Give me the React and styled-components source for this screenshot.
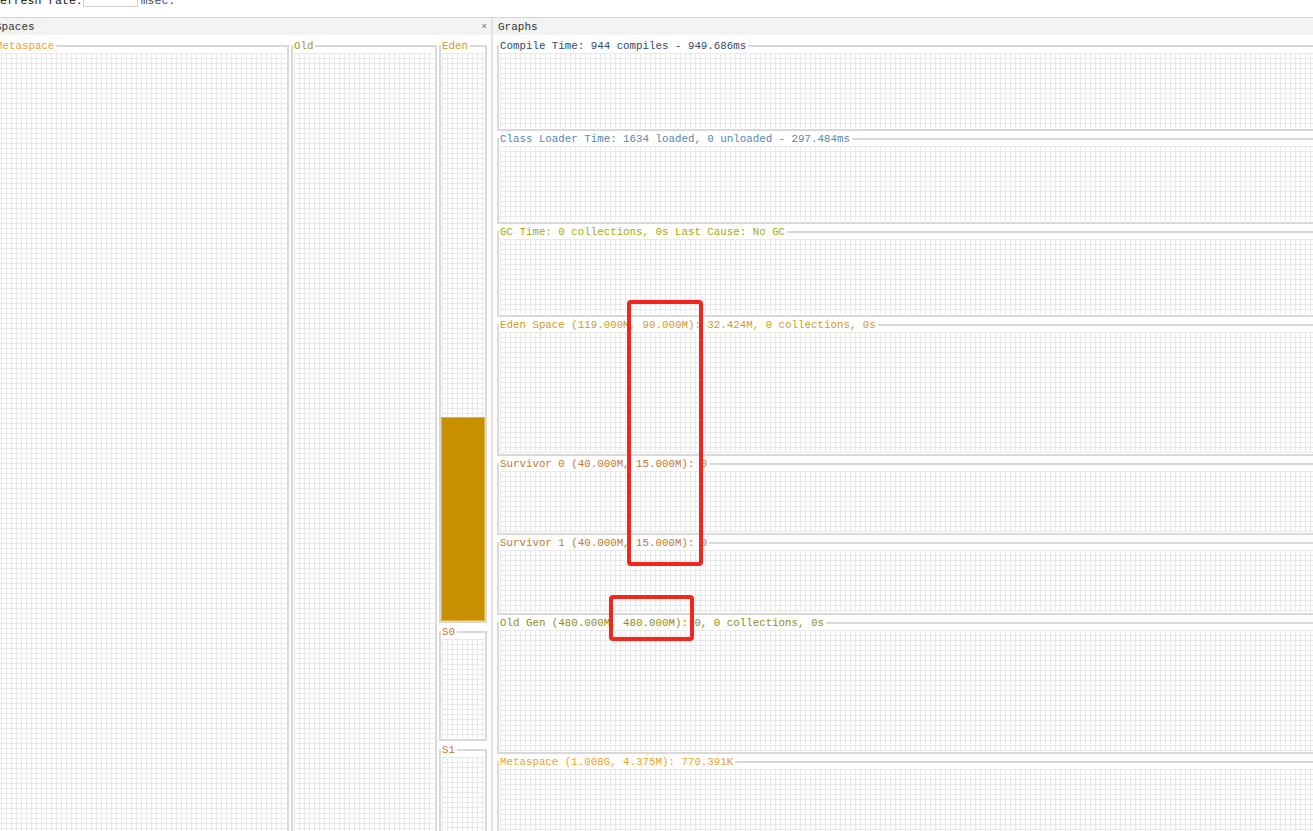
import React from 'react';
import styled, { createGlobalStyle } from 'styled-components';

const GlobalStyle = createGlobalStyle`
  html, body {
    margin: 0;
    padding: 0;
    background: #fff;
    overflow: hidden;
  }
`;

const Screen = styled.div`
  position: relative;
  width: 1313px;
  height: 831px;
  overflow: hidden;
  font-family: 'Liberation Mono', 'DejaVu Sans Mono', monospace;
  font-size: 10.8px;
  color: #222;
`;

const Shifted = styled.div`
  margin-left: -11px;
  width: 1360px;
`;

const TopBar = styled.div`
  margin-top: -12px;
  height: 29px;
  box-sizing: border-box;
  padding: 0 0 10px 4px;
  display: flex;
  align-items: flex-end;
  gap: 3px;
  line-height: 12px;
  font-size: 11.5px;
  color: #111;
`;

const RateSelect = styled.div`
  width: 55px;
  height: 17px;
  margin-left: -3px;
  box-sizing: border-box;
  border: 1px solid #cfcfcf;
  color: #999;
  display: flex;
  align-items: flex-end;
  justify-content: flex-end;
  padding: 0 3px 2px 0;
  gap: 3px;
  font-size: 10px;
`;

const Unit = styled.span`
  color: #34496a;
`;

const Panels = styled.div`
  display: flex;
  border-top: 1px solid #d6d6d6;
`;

const Panel = styled.section`
  width: ${({ $w }) => $w}px;
  flex: none;
  border-left: 1px solid #e2e2e2;
  border-right: 1px solid #e2e2e2;
`;

const PanelHeader = styled.header`
  height: 17px;
  background: #f3f3f3;
  display: flex;
  align-items: center;
  justify-content: space-between;
  padding: 0 4px 0 5px;
  color: #333;
  font-size: 11px;
`;

const Close = styled.span`
  color: #666;
  font-size: 9px;
`;

const SpacesBody = styled.div`
  display: flex;
  align-items: flex-start;
  gap: 2px;
  padding: 4px 2px 0 3px;
`;

const GraphsBody = styled.div`
  display: flex;
  flex-direction: column;
  gap: 1px;
  padding: 4px 0 0 4px;
`;

const Column = styled.div`
  display: flex;
  flex-direction: column;
  gap: 2px;
  width: ${({ $w }) => $w}px;
`;

const Box = styled.fieldset`
  margin: 0;
  padding: 0 1px 1px 1px;
  border: 2px solid #d9d9d9;
  width: ${({ $w }) => ($w ? `${$w}px` : 'auto')};
  box-sizing: border-box;
  min-width: 0;
`;

const Legend = styled.legend`
  padding: 0 2px 0 1px;
  margin-left: -1px;
  line-height: 14px;
  white-space: nowrap;
  color: ${({ $color }) => $color};
`;

const Grid = styled.div`
  height: ${({ $h }) => $h}px;
  display: flex;
  align-items: flex-end;
  background-color: #fff;
  background-image: linear-gradient(to right, #e9e9e9 1px, transparent 1px),
    linear-gradient(to bottom, #e9e9e9 1px, transparent 1px);
  background-size: 5px 5px;
`;

const Fill = styled.div`
  width: calc(100% + 2px);
  flex: none;
  box-sizing: border-box;
  margin: 0 -1px -1px;
  background: #c89000;
  border: 1px solid #e2b43e;
`;

const Mark = styled.div`
  position: absolute;
  box-sizing: border-box;
  border: 4px solid #f5251e;
  border-radius: 4px;
  left: ${({ $x }) => $x}px;
  top: ${({ $y }) => $y}px;
  width: ${({ $w }) => $w}px;
  height: ${({ $h }) => $h}px;
`;

const colors = {
  compile: '#2f4a68',
  loader: '#5288b2',
  gc: '#a3ad00',
  eden: '#d49a1c',
  survivor: '#c9752a',
  old: '#8e8e12',
  meta: '#f0a21e',
  oldSpace: '#a39424',
};

const graphs = [
  { label: 'Compile Time: 944 compiles - 949.686ms', color: colors.compile, h: 75 },
  { label: 'Class Loader Time: 1634 loaded, 0 unloaded - 297.484ms', color: colors.loader, h: 75 },
  { label: 'GC Time: 0 collections, 0s Last Cause: No GC', color: colors.gc, h: 75 },
  { label: 'Eden Space (119.000M, 90.000M): 32.424M, 0 collections, 0s', color: colors.eden, h: 121 },
  { label: 'Survivor 0 (40.000M, 15.000M): 0', color: colors.survivor, h: 61 },
  { label: 'Survivor 1 (40.000M, 15.000M): 0', color: colors.survivor, h: 62 },
  { label: 'Old Gen (480.000M, 480.000M): 0, 0 collections, 0s', color: colors.old, h: 121 },
  { label: 'Metaspace (1.008G, 4.375M): 770.391K', color: colors.meta, h: 200 },
];

const edenUsed = 32.424;
const edenMax = 90;
const edenHeight = 567;

export default function App() {
  return (
    <Screen>
      <GlobalStyle />
      <Shifted>
        <TopBar>
          <span>Refresh rate:</span>
          <RateSelect>
            Auto<span>▾</span>
          </RateSelect>
          <Unit>msec.</Unit>
        </TopBar>
        <Panels>
          <Panel $w={501}>
            <PanelHeader>
              <span>Spaces</span>
              <Close>×</Close>
            </PanelHeader>
            <SpacesBody>
              <Box $w={296}>
                <Legend $color={colors.meta}>Metaspace</Legend>
                <Grid $h={790} />
              </Box>
              <Box $w={146}>
                <Legend $color={colors.oldSpace}>Old</Legend>
                <Grid $h={790} />
              </Box>
              <Column $w={48}>
                <Box>
                  <Legend $color={colors.eden}>Eden</Legend>
                  <Grid $h={edenHeight}>
                    <Fill style={{ height: `${(edenUsed / edenMax) * edenHeight}px` }} />
                  </Grid>
                </Box>
                <Box>
                  <Legend $color={colors.survivor}>S0</Legend>
                  <Grid $h={99} />
                </Box>
                <Box>
                  <Legend $color={colors.survivor}>S1</Legend>
                  <Grid $h={120} />
                </Box>
              </Column>
            </SpacesBody>
          </Panel>
          <Panel $w={840}>
            <PanelHeader>
              <span>Graphs</span>
            </PanelHeader>
            <GraphsBody>
              {graphs.map((g) => (
                <Box key={g.label}>
                  <Legend $color={g.color}>{g.label}</Legend>
                  <Grid $h={g.h} />
                </Box>
              ))}
            </GraphsBody>
          </Panel>
        </Panels>
      </Shifted>
      <Mark $x={627} $y={300} $w={76} $h={266} />
      <Mark $x={609} $y={595} $w={85} $h={46} />
    </Screen>
  );
}
